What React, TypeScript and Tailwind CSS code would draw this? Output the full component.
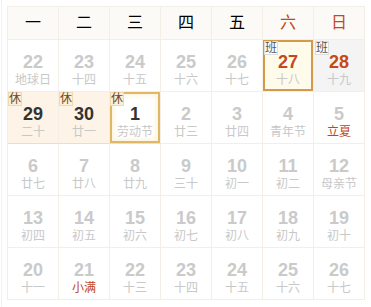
import React from 'react';

type Day = {
    num: number;
    lunar: string;
    kind?: 'dim' | 'dark' | 'red';
    lunarRed?: boolean;
    badge?: '班' | '休';
    style?: 'work' | 'weekend' | 'rest' | 'today';
};

const weekdays = ['一', '二', '三', '四', '五', '六', '日'];

const weeks: Day[][] = [
    [
        { num: 22, lunar: '地球日' },
        { num: 23, lunar: '十四' },
        { num: 24, lunar: '十五' },
        { num: 25, lunar: '十六' },
        { num: 26, lunar: '十七' },
        { num: 27, lunar: '十八', kind: 'red', badge: '班', style: 'work' },
        { num: 28, lunar: '十九', kind: 'red', badge: '班', style: 'weekend' },
    ],
    [
        { num: 29, lunar: '二十', kind: 'dark', badge: '休', style: 'rest' },
        { num: 30, lunar: '廿一', kind: 'dark', badge: '休', style: 'rest' },
        { num: 1, lunar: '劳动节', kind: 'dark', badge: '休', style: 'today' },
        { num: 2, lunar: '廿三' },
        { num: 3, lunar: '廿四' },
        { num: 4, lunar: '青年节' },
        { num: 5, lunar: '立夏', lunarRed: true },
    ],
    [
        { num: 6, lunar: '廿七' },
        { num: 7, lunar: '廿八' },
        { num: 8, lunar: '廿九' },
        { num: 9, lunar: '三十' },
        { num: 10, lunar: '初一' },
        { num: 11, lunar: '初二' },
        { num: 12, lunar: '母亲节' },
    ],
    [
        { num: 13, lunar: '初四' },
        { num: 14, lunar: '初五' },
        { num: 15, lunar: '初六' },
        { num: 16, lunar: '初七' },
        { num: 17, lunar: '初八' },
        { num: 18, lunar: '初九' },
        { num: 19, lunar: '初十' },
    ],
    [
        { num: 20, lunar: '十一' },
        { num: 21, lunar: '小满', lunarRed: true },
        { num: 22, lunar: '十三' },
        { num: 23, lunar: '十四' },
        { num: 24, lunar: '十五' },
        { num: 25, lunar: '十六' },
        { num: 26, lunar: '十七' },
    ],
];

function cellClass(d: Day) {
    switch (d.style) {
        case 'work':
            return 'bg-[#fffbea] shadow-[inset_0_0_0_2px_#d39a4a]';
        case 'weekend':
            return 'bg-[#f4f4f4]';
        case 'rest':
            return 'bg-[#fdf4e7] border-b-[#f7dcae]';
        case 'today':
            return 'bg-white shadow-[inset_0_0_0_2px_#dfb865,inset_0_0_5px_4px_#fdf3dc] border-b-[#f7dcae]';
        default:
            return 'bg-white';
    }
}

function numColor(d: Day) {
    if (d.kind === 'dark') return 'text-[#333333]';
    if (d.kind === 'red') return 'text-[#c5481a]';
    return 'text-[#cacaca]';
}

function DayCell({ d }: { d: Day }) {
    return (
        <div className={`relative h-[52px] border-r border-b border-[#f3eee6] ${cellClass(d)}`}>
            {d.badge && (
                <span
                    className={`absolute left-0 top-0 h-[14px] w-[14px] border text-[12px] leading-[12px] text-center ${
                        d.badge === '班'
                            ? 'bg-white border-[#dddddd] text-[#555555] left-[1px] top-[1px]'
                            : 'bg-[#fcefd9] border-[#f0d8b2] text-[#6b4a22]'
                    }`}
                >
                    {d.badge}
                </span>
            )}
            <div className={`pt-[12px] text-center text-[18px] leading-[20px] font-bold ${numColor(d)}`}>{d.num}</div>
            <div className={`text-center text-[12px] leading-[16px] ${d.lunarRed ? 'text-[#c0461b]' : 'text-[#c8c8c8]'}`}>
                {d.lunar}
            </div>
        </div>
    );
}

export default function App() {
    return (
        <div
            className="w-[371px] h-[307px] bg-white ml-[1px] border-l border-[#f6f2eb] pl-[5px] pt-[6px]"
            style={{ fontFamily: '"Liberation Sans", "Noto Sans CJK SC", sans-serif' }}
        >
            <div className="grid grid-cols-[repeat(7,51px)] border-l border-t border-[#f3eee6] w-[358px]">
                {weekdays.map((w, i) => (
                    <div
                        key={w}
                        className={`h-[33px] flex items-center justify-center border-r border-b border-[#f3eee6] bg-[#fbfaf7] text-[16px] ${
                            i >= 5 ? 'text-[#c5481a]' : 'text-black'
                        }`}
                    >
                        {w}
                    </div>
                ))}
                {weeks.flat().map((d, i) => (
                    <DayCell key={i} d={d} />
                ))}
            </div>
        </div>
    );
}
